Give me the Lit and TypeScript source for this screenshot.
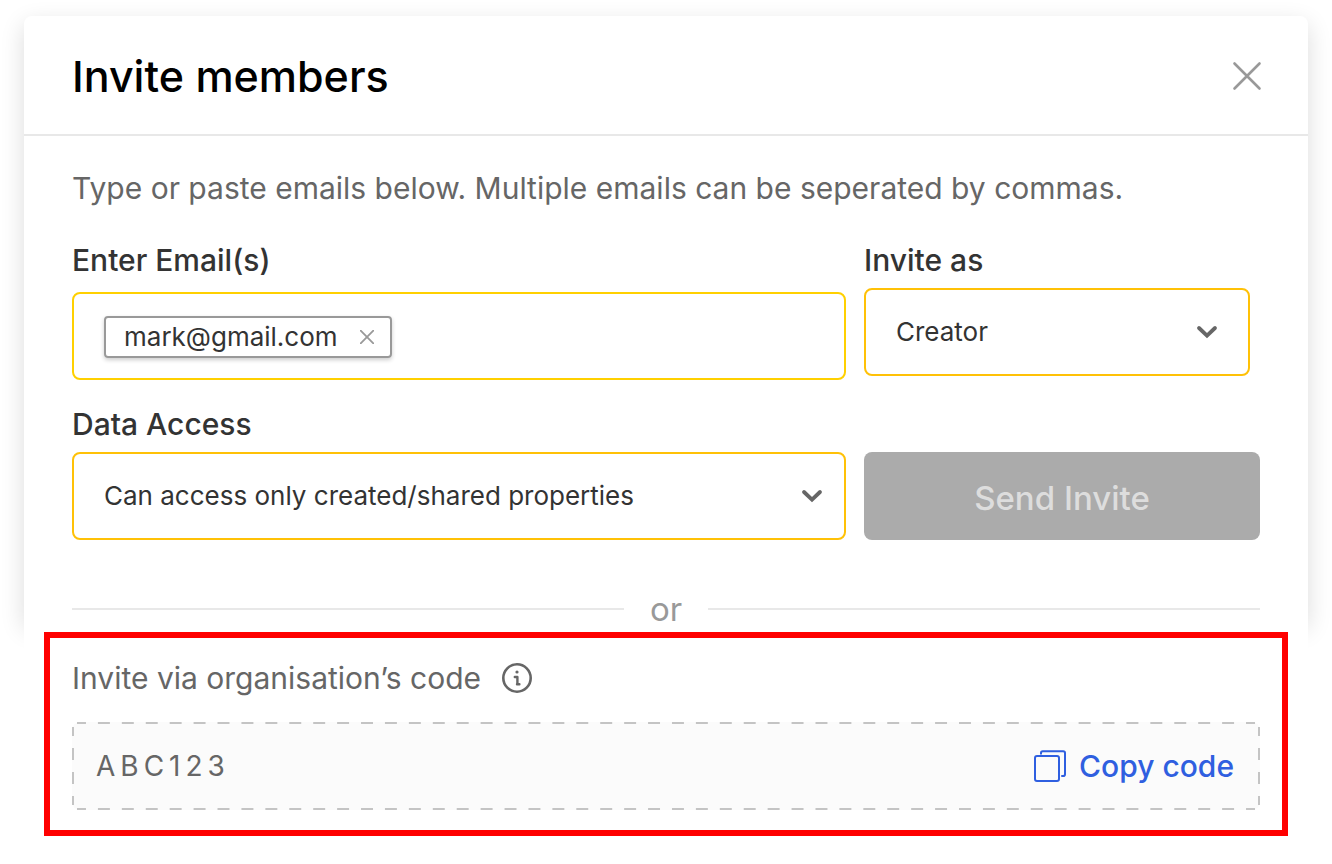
import { LitElement, html, css } from "lit";
import { customElement, state } from "lit/decorators.js";

const chevron = html`<svg class="chevron" width="24" height="16" viewBox="0 0 24 16" aria-hidden="true">
  <path d="M4 4 L12 11.6 L20 4" fill="none" stroke="#666" stroke-width="3.8" stroke-linecap="round" />
</svg>`;

@customElement("app-root")
export class AppRoot extends LitElement {
  @state() private emails = ["mark@gmail.com"];
  @state() private code = "ABC123";

  static styles = css`
    :host {
      display: block;
      box-sizing: border-box;
      min-height: 100vh;
      padding: 16px 24px 28px;
      background: #fff;
      color: #333;
      font-family: Inter, "Open Sans", sans-serif;
      font-size: 30px;
      line-height: 36px;
    }
    *, *::before, *::after { box-sizing: border-box; }
    h1, p { margin: 0; }
    button, input, select { font: inherit; color: inherit; margin: 0; padding: 0; border: 0; background: none; }
    svg { display: block; }

    .invite {
      border-radius: 8px 8px 0 0;
      background: #fff;
      box-shadow: 0 8px 24px rgba(0, 0, 0, 0.14);
    }
    .head {
      display: flex;
      align-items: center;
      justify-content: space-between;
      padding: 36px 46px 34px 48px;
      border-bottom: 2px solid #e8e8e8;
    }
    h1 { color: #000; font-size: 43px; font-weight: 500; line-height: 48px; }
    .body { padding: 34px 48px 0; }
    .hint { color: #666; }
    .form {
      display: grid;
      grid-template-columns: minmax(0, 1fr) 396px;
      gap: 26px 18px;
      padding-top: 36px;
    }
    .field { display: flex; flex-direction: column; gap: 10px; }
    .field.emails { gap: 14px; }
    .field.role { padding-right: 10px; }
    .label { font-weight: 500; }
    .box {
      height: 88px;
      border: 2px solid #ffc107;
      border-radius: 8px;
      font-size: 26px;
    }
    .emails .box {
      display: flex;
      align-items: center;
      gap: 12px;
      padding: 2px 30px 0;
      border-color: #ffd000;
    }
    .emails input { flex: 1; min-width: 0; outline: none; }
    .chip {
      display: flex;
      align-items: center;
      gap: 22px;
      height: 42px;
      padding: 0 16px 0 18px;
      border: 2px solid #999;
      border-radius: 4px;
      box-shadow: 0 2px 4px rgba(0, 0, 0, 0.2);
    }
    .picker { display: grid; align-items: center; }
    .picker select, .picker svg { grid-area: 1 / 1; }
    .picker select { width: 100%; height: 100%; padding: 0 60px 0 30px; appearance: none; border-radius: 6px; }
    .picker svg { justify-self: end; margin-right: 20px; pointer-events: none; }
    .role .picker svg { margin-right: 29px; }
    .send {
      align-self: end;
      height: 88px;
      padding-top: 4px;
      border-radius: 8px;
      background: #ababab;
      color: #ddd;
      font-size: 33px;
      font-weight: 500;
    }
    .or {
      display: grid;
      grid-template-columns: 1fr 84px 1fr;
      align-items: center;
      padding-top: 57px;
      color: #999;
      font-size: 33px;
      line-height: 24px;
      text-align: center;
    }
    .or::before, .or::after { content: ""; height: 2px; background: #e8e8e8; }

    .share { position: relative; padding: 11px 20px 0; background: #fff; }
    .frame { padding: 22px 22px 20px; border: 6px solid #f00; }
    .title { display: flex; align-items: center; gap: 20px; color: #666; }
    .code {
      position: relative;
      display: flex;
      align-items: center;
      justify-content: space-between;
      height: 88px;
      margin-top: 26px;
      padding: 0 26px 0 24px;
      border-radius: 8px;
      background: #fbfbfb;
    }
    .dashes { position: absolute; top: 0; left: 5px; width: calc(100% - 10px); height: 100%; overflow: visible; pointer-events: none; }
    .value { color: #666; font-size: 28px; letter-spacing: 5px; }
    .copy { display: flex; align-items: center; gap: 13px; color: #2f5fe0; font-weight: 500; }
  `;

  private remove(email: string) {
    this.emails = this.emails.filter((e) => e !== email);
  }

  render() {
    return html`
      <main>
        <section class="invite">
          <header class="head">
            <h1>Invite members</h1>
            <button type="button" aria-label="Close">
              <svg width="30" height="30" viewBox="0 0 30 30" aria-hidden="true">
                <path d="M2.5 2.5 L27.5 27.5 M27.5 2.5 L2.5 27.5" fill="none" stroke="#999" stroke-width="2.6" stroke-linecap="round" />
              </svg>
            </button>
          </header>
          <div class="body">
            <p class="hint">Type or paste emails below. Multiple emails can be seperated by commas.</p>
            <form class="form">
              <div class="field emails">
                <label class="label" for="emails">Enter Email(s)</label>
                <div class="box">
                  ${this.emails.map(
                    (email) => html`<span class="chip">
                      ${email}
                      <button type="button" aria-label="Remove ${email}" @click=${() => this.remove(email)}>
                        <svg width="14" height="14" viewBox="0 0 14 14" aria-hidden="true">
                          <path d="M0.7 0.7 L13.3 13.3 M13.3 0.7 L0.7 13.3" fill="none" stroke="#999" stroke-width="1.8" stroke-linecap="round" />
                        </svg>
                      </button>
                    </span>`,
                  )}
                  <input id="emails" type="text" />
                </div>
              </div>
              <div class="field role">
                <label class="label" for="role">Invite as</label>
                <div class="box picker">
                  <select id="role"><option>Creator</option></select>
                  ${chevron}
                </div>
              </div>
              <div class="field">
                <label class="label" for="access">Data Access</label>
                <div class="box picker">
                  <select id="access"><option>Can access only created/shared properties</option></select>
                  ${chevron}
                </div>
              </div>
              <button class="send" type="button" disabled>Send Invite</button>
            </form>
            <div class="or">or</div>
          </div>
        </section>
        <section class="share">
          <div class="frame">
            <div class="title">
              <span>Invite via organisation’s code</span>
              <svg width="32" height="32" viewBox="0 0 32 32" role="img" aria-label="Info">
                <circle cx="16" cy="16" r="13.7" fill="none" stroke="#666" stroke-width="2.6" />
                <circle cx="16" cy="10" r="1.6" fill="#666" />
                <path d="M13.8 15 H16.4 V22 M16 22.2 H18.4" fill="none" stroke="#666" stroke-width="2.4" stroke-linecap="round" stroke-linejoin="round" />
              </svg>
            </div>
            <div class="code">
              <svg class="dashes" aria-hidden="true" fill="none" stroke="#c4c4c4" stroke-width="2" stroke-dasharray="12" stroke-dashoffset="3">
                <line x1="0" y1="1" x2="100%" y2="1" pathLength="1182" />
                <line x1="0" y1="87" x2="100%" y2="87" pathLength="1182" />
                <line x1="-4" y1="5" x2="-4" y2="83" />
                <line x1="100%" y1="5" x2="100%" y2="83" transform="translate(4 0)" />
              </svg>
              <span class="value">${this.code}</span>
              <button class="copy" type="button">
                <svg width="32" height="32" viewBox="0 0 32 32" aria-hidden="true" fill="none" stroke="#2f5fe0" stroke-width="2">
                  <rect x="1" y="6" width="24" height="25" rx="2" />
                  <path d="M7 3.8 V3 Q7 1.2 8.8 1.2 H29.2 Q31 1.2 31 3 V24.2 Q31 26 29.2 26 H28" stroke-linecap="round" />
                </svg>
                Copy code
              </button>
            </div>
          </div>
        </section>
      </main>
    `;
  }
}
